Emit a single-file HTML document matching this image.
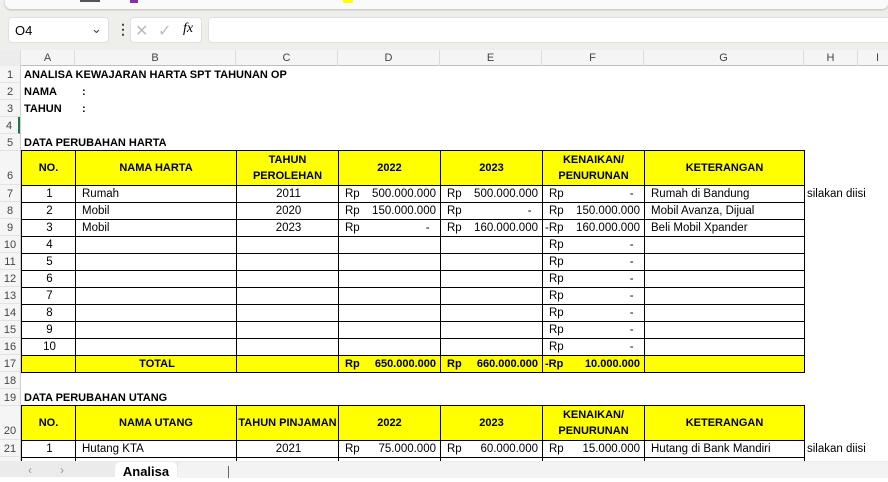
<!DOCTYPE html>
<html><head><meta charset="utf-8">
<style>
*{box-sizing:border-box;margin:0;padding:0}
body{width:888px;height:477px;overflow:hidden;background:#fff;font-family:"Liberation Sans",sans-serif;font-size:11px;color:#000;position:relative}
.abs{position:absolute}
#top{left:0;top:0;width:888px;height:50px;background:#eeeeea}
#strip{left:5px;top:-4px;width:883px;height:13px;background:#fafafa;border-radius:0 0 6px 6px;box-shadow:0 1px 2px #bbb}
.box{background:#fff;border-radius:4px;border:1px solid #e0e0e0}
#colhdr{left:0;top:50px;width:888px;height:16px;background:#f5f5f5;border-bottom:1px solid #bdbdbd}
.ch{position:absolute;top:0;height:16px;line-height:16px;text-align:center;color:#444;font-size:11px;border-right:1px solid #dcdcdc}
#rowhdr{left:0;top:66px;width:21px;height:400px;background:#f5f5f5;border-right:1px solid #cfcfcf}
.rh{position:absolute;left:0;width:20px;text-align:center;color:#444;font-size:11px;border-bottom:1px solid #e2e2e2}
.t{position:absolute;left:24px;font-weight:bold;font-size:11px}
table{position:absolute;left:21px;border-collapse:collapse;table-layout:fixed;width:783px}
td{border:1px solid #000;padding:0 4px 0 6px;font-size:11.5px;height:17px;white-space:nowrap;overflow:hidden}
.y td{background:#ff0;font-weight:bold;text-align:center;line-height:16px;font-size:11px;padding:0}
.c{text-align:center}
.m{display:flex;justify-content:space-between}
.tot td{background:#ff0;font-weight:bold;font-size:11px}
#tabs{left:0;top:461px;width:888px;height:16px;background:#ebebeb}
</style></head><body>
<div id="top" class="abs">
 <div id="strip" class="abs"></div>
 <div class="abs" style="left:80px;top:0;width:20px;height:2px;background:#555"></div>
 <div class="abs" style="left:130px;top:0;width:8px;height:3px;background:#8b2fa8"></div>
 <div class="abs" style="left:343px;top:0;width:10px;height:3px;background:#ff0"></div>
 <div class="abs box" style="left:8px;top:17px;width:101px;height:26px;"><span class="abs" style="left:6px;top:5px;font-size:13px">O4</span><span class="abs" style="left:82px;top:3px;font-size:13px;color:#444">⌄</span></div>
 <div class="abs" style="left:116px;top:21px;font-size:14px;color:#444;font-weight:bold">⋮</div>
 <div class="abs box" style="left:130px;top:17px;width:72px;height:26px;"><span class="abs" style="left:4px;top:3px;font-size:16px;color:#bbb">✕</span><span class="abs" style="left:27px;top:3px;font-size:16px;color:#bbb">✓</span><span class="abs" style="left:52px;top:3px;font-size:14px;font-style:italic;font-family:'Liberation Serif',serif">fx</span></div>
 <div class="abs box" style="left:208px;top:17px;width:690px;height:26px;"></div>
</div>
<div id="colhdr" class="abs">
 <div class="ch" style="left:0;width:21px;background:#ececec"></div>
 <div class="ch" style="left:21px;width:54px">A</div>
 <div class="ch" style="left:75px;width:161px">B</div>
 <div class="ch" style="left:236px;width:102px">C</div>
 <div class="ch" style="left:338px;width:102px">D</div>
 <div class="ch" style="left:440px;width:102px">E</div>
 <div class="ch" style="left:542px;width:102px">F</div>
 <div class="ch" style="left:644px;width:160px">G</div>
 <div class="ch" style="left:804px;width:54px">H</div>
 <div class="ch" style="left:858px;width:40px">I</div>
</div>
<div id="rowhdr" class="abs">
 <div class="rh" style="top:0;height:17px;line-height:18px">1</div>
 <div class="rh" style="top:17px;height:17px;line-height:18px">2</div>
 <div class="rh" style="top:34px;height:17px;line-height:18px">3</div>
 <div class="rh" style="top:51px;height:17px;line-height:18px;border-right:2px solid #217346">4</div>
 <div class="rh" style="top:68px;height:17px;line-height:18px">5</div>
 <div class="rh" style="top:85px;height:34px;line-height:50px">6</div>
 <div class="rh" style="top:119px;height:17px;line-height:18px">7</div>
 <div class="rh" style="top:136px;height:17px;line-height:18px">8</div>
 <div class="rh" style="top:153px;height:17px;line-height:18px">9</div>
 <div class="rh" style="top:170px;height:17px;line-height:18px">10</div>
 <div class="rh" style="top:187px;height:17px;line-height:18px">11</div>
 <div class="rh" style="top:204px;height:17px;line-height:18px">12</div>
 <div class="rh" style="top:221px;height:17px;line-height:18px">13</div>
 <div class="rh" style="top:238px;height:17px;line-height:18px">14</div>
 <div class="rh" style="top:255px;height:17px;line-height:18px">15</div>
 <div class="rh" style="top:272px;height:17px;line-height:18px">16</div>
 <div class="rh" style="top:289px;height:17px;line-height:18px">17</div>
 <div class="rh" style="top:306px;height:17px;line-height:18px">18</div>
 <div class="rh" style="top:323px;height:17px;line-height:18px">19</div>
 <div class="rh" style="top:340px;height:34px;line-height:50px">20</div>
 <div class="rh" style="top:374px;height:17px;line-height:18px">21</div>
</div>
<div class="t" style="top:69px">ANALISA KEWAJARAN HARTA SPT TAHUNAN OP</div>
<div class="t" style="top:86px">NAMA</div><div class="t" style="top:86px;left:82px">:</div>
<div class="t" style="top:103px">TAHUN</div><div class="t" style="top:103px;left:82px">:</div>
<div class="t" style="top:137px">DATA PERUBAHAN HARTA</div>
<div class="t" style="top:392px">DATA PERUBAHAN UTANG</div>
<div class="abs" style="left:807px;top:188px;font-size:11.5px">silakan diisi</div>
<div class="abs" style="left:807px;top:443px;font-size:11.5px">silakan diisi</div>

<table style="top:150px">
<colgroup><col style="width:54px"><col style="width:161px"><col style="width:102px"><col style="width:102px"><col style="width:102px"><col style="width:102px"><col style="width:160px"></colgroup>
<tr class="y"><td style="height:35px">NO.</td><td>NAMA HARTA</td><td>TAHUN<br>PEROLEHAN</td><td>2022</td><td>2023</td><td>KENAIKAN/<br>PENURUNAN</td><td>KETERANGAN</td></tr>
<tr><td class="c">1</td><td>Rumah</td><td class="c">2011</td><td><div class="m"><span>Rp</span><span>500.000.000</span></div></td><td><div class="m"><span>Rp</span><span>500.000.000</span></div></td><td><div class="m"><span>Rp</span><span>-&nbsp;&nbsp;</span></div></td><td>Rumah di Bandung</td></tr>
<tr><td class="c">2</td><td>Mobil</td><td class="c">2020</td><td><div class="m"><span>Rp</span><span>150.000.000</span></div></td><td><div class="m"><span>Rp</span><span>-&nbsp;&nbsp;</span></div></td><td><div class="m"><span>Rp</span><span>150.000.000</span></div></td><td>Mobil Avanza, Dijual</td></tr>
<tr><td class="c">3</td><td>Mobil</td><td class="c">2023</td><td><div class="m"><span>Rp</span><span>-&nbsp;&nbsp;</span></div></td><td><div class="m"><span>Rp</span><span>160.000.000</span></div></td><td style="padding-left:2px"><div class="m"><span>-Rp</span><span>160.000.000</span></div></td><td>Beli Mobil Xpander</td></tr>
<tr><td class="c">4</td><td></td><td></td><td></td><td></td><td><div class="m"><span>Rp</span><span>-&nbsp;&nbsp;</span></div></td><td></td></tr>
<tr><td class="c">5</td><td></td><td></td><td></td><td></td><td><div class="m"><span>Rp</span><span>-&nbsp;&nbsp;</span></div></td><td></td></tr>
<tr><td class="c">6</td><td></td><td></td><td></td><td></td><td><div class="m"><span>Rp</span><span>-&nbsp;&nbsp;</span></div></td><td></td></tr>
<tr><td class="c">7</td><td></td><td></td><td></td><td></td><td><div class="m"><span>Rp</span><span>-&nbsp;&nbsp;</span></div></td><td></td></tr>
<tr><td class="c">8</td><td></td><td></td><td></td><td></td><td><div class="m"><span>Rp</span><span>-&nbsp;&nbsp;</span></div></td><td></td></tr>
<tr><td class="c">9</td><td></td><td></td><td></td><td></td><td><div class="m"><span>Rp</span><span>-&nbsp;&nbsp;</span></div></td><td></td></tr>
<tr><td class="c">10</td><td></td><td></td><td></td><td></td><td><div class="m"><span>Rp</span><span>-&nbsp;&nbsp;</span></div></td><td></td></tr>
<tr class="tot"><td></td><td class="c">TOTAL</td><td></td><td><div class="m"><span>Rp</span><span>650.000.000</span></div></td><td><div class="m"><span>Rp</span><span>660.000.000</span></div></td><td style="padding-left:2px"><div class="m"><span>-Rp</span><span>10.000.000</span></div></td><td></td></tr>
</table>

<table style="top:405px">
<colgroup><col style="width:54px"><col style="width:161px"><col style="width:102px"><col style="width:102px"><col style="width:102px"><col style="width:102px"><col style="width:160px"></colgroup>
<tr class="y"><td style="height:35px">NO.</td><td>NAMA UTANG</td><td>TAHUN PINJAMAN</td><td>2022</td><td>2023</td><td>KENAIKAN/<br>PENURUNAN</td><td>KETERANGAN</td></tr>
<tr><td class="c">1</td><td>Hutang KTA</td><td class="c">2021</td><td><div class="m"><span>Rp</span><span>75.000.000</span></div></td><td><div class="m"><span>Rp</span><span>60.000.000</span></div></td><td><div class="m"><span>Rp</span><span>15.000.000</span></div></td><td>Hutang di Bank Mandiri</td></tr>
<tr><td></td><td></td><td></td><td></td><td></td><td></td><td></td></tr>
</table>

<div id="tabs" class="abs">
 <div class="abs" style="left:28px;top:2px;color:#999;font-size:12px">‹</div>
 <div class="abs" style="left:60px;top:2px;color:#999;font-size:12px">›</div>
 <div class="abs" style="left:115px;top:1px;width:62px;height:16px;background:#fff;border-radius:5px 5px 0 0;font-weight:bold;font-size:13px;text-align:center;line-height:20px">Analisa</div>
 <div class="abs" style="left:178px;top:1px;width:710px;height:16px;background:#f3f3f3;border-radius:5px 0 0 0"></div>
 <div class="abs" style="left:228px;top:5px;width:1px;height:12px;background:#666"></div>
</div>
</body></html>
